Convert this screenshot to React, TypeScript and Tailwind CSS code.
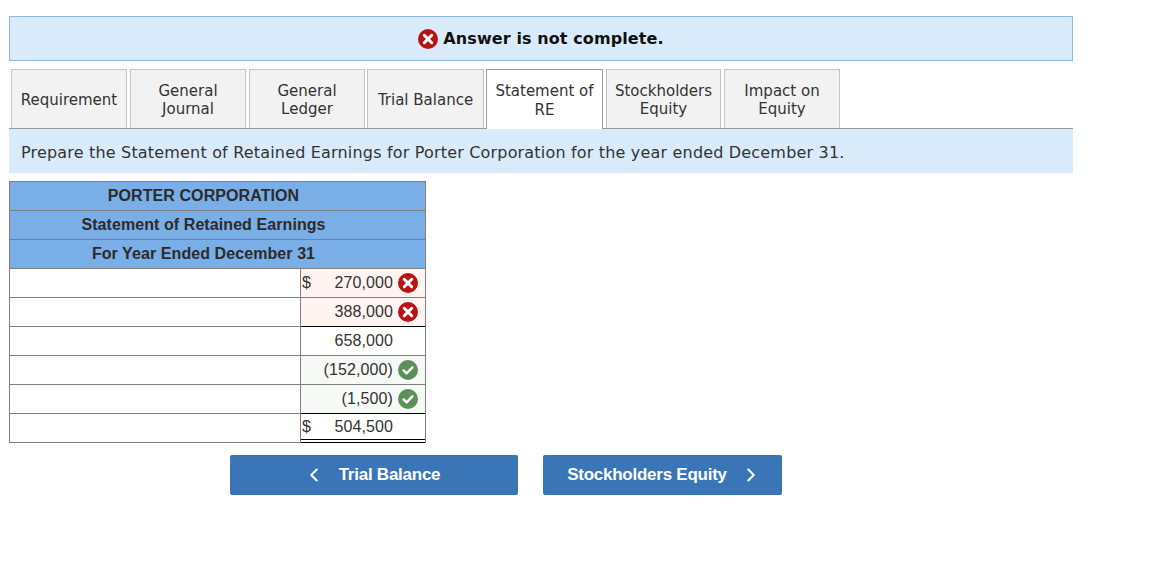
import { ChevronLeft, ChevronRight } from 'lucide-react'

const verdana = { fontFamily: '"DejaVu Sans", Verdana, sans-serif' }

const tabs = [
  { label: ['Requirement'], w: 'w-[119px] pr-[3px]' },
  { label: ['General', 'Journal'], w: 'w-[119px] pr-[3px]' },
  { label: ['General', 'Ledger'], w: 'w-[118px] pr-[2px]' },
  { label: ['Trial Balance'], w: 'w-[119px] pr-[2px]' },
  { label: ['Statement of', 'RE'], w: 'w-[120px] pr-[3px]', active: true },
  { label: ['Stockholders', 'Equity'], w: 'w-[118px] pr-[3px]' },
  { label: ['Impact on', 'Equity'], w: 'w-[119px] pr-[3px]' },
]

const rows = [
  { dollar: true, value: '270,000', mark: 'bad', top: 'border-t-[#808080]' },
  { value: '388,000', mark: 'bad', top: 'border-t-[#808080]' },
  { value: '658,000', top: 'border-t-black' },
  { value: '(152,000)', mark: 'good', top: 'border-t-[#808080]' },
  { value: '(1,500)', mark: 'good', top: 'border-t-[#808080]' },
  { dollar: true, value: '504,500', top: 'border-t-black', total: true },
]

function BadIcon({ size = 20 }: { size?: number }) {
  return (
    <svg width={size} height={size} viewBox="0 0 20 20" className="shrink-0">
      <circle cx="10" cy="10" r="10" fill="#b81414" />
      <path d="M6.3 6.3l7.4 7.4M13.7 6.3l-7.4 7.4" stroke="#fff" strokeWidth="3" strokeLinecap="round" />
    </svg>
  )
}

function GoodIcon() {
  return (
    <svg width="20" height="20" viewBox="0 0 20 20" className="shrink-0">
      <circle cx="10" cy="10" r="10" fill="#5b9158" />
      <path d="M5.6 10.4l3 2.9 5.8-6" fill="none" stroke="#fff" strokeWidth="2.4" strokeLinecap="round" strokeLinejoin="round" />
    </svg>
  )
}

export default function App() {
  return (
    <div className="min-h-[567px] bg-white pt-4 pl-[9px] font-['Liberation_Sans',Arial,sans-serif]">
      <div className="w-[1064px]">
        {/* Banner */}
        <div className="flex h-[45px] items-center justify-center gap-[5px] border border-[#8cb8e6] bg-[#d9ebfa]">
          <BadIcon />
          <span style={verdana} className="text-[16px] font-bold tracking-[0.1px] text-[#111]">Answer is not complete.</span>
        </div>

        {/* Tabs */}
        <div className="mt-2 flex h-[60px] items-start border-b border-b-[#999] pl-[2px] text-[15px] leading-[18.5px] text-[#333]" style={verdana}>
          {tabs.map((tab) => (
            <div key={tab.label.join(' ')} className={`${tab.w} shrink-0`}>
              <div
                className={
                  tab.active
                    ? 'relative flex h-[60px] flex-col items-center justify-center border border-b-0 border-[#999] bg-white pt-[3px] pb-px'
                    : 'flex h-[59px] flex-col items-center justify-center border border-b-0 border-[#c4c4c4] bg-[#f2f2f2] pt-[2px]'
                }
              >
                {tab.label.map((line) => (
                  <span key={line} className="whitespace-nowrap">{line}</span>
                ))}
              </div>
            </div>
          ))}
        </div>

        {/* Instruction */}
        <div style={verdana} className="flex h-[44px] items-center bg-[#d9ebfa] pt-[3px] pl-3 text-[16px] tracking-[0.18px] text-[#333]">
          Prepare the Statement of Retained Earnings for Porter Corporation for the year ended December 31.
        </div>

        {/* Statement table */}
        <div className="mt-2 w-[417px] border-x border-b border-[#808080] text-[16px] text-[#333]">
          {['PORTER CORPORATION', 'Statement of Retained Earnings', 'For Year Ended December 31'].map((title) => (
            <div key={title} className="flex h-[29px] items-center justify-center border-t border-[#808080] bg-[#7aaee6] pr-[28px] pb-px font-bold tracking-[0.08px] text-[#2b2b2b]">
              {title}
            </div>
          ))}
          {rows.map((row) => (
            <div key={row.value} className="flex h-[29px] border-t border-[#808080]">
              <div className="w-[291px] shrink-0 border-r border-[#808080] bg-white" />
              <div
                className={`relative -mt-px flex h-[29px] flex-1 items-center border-t ${row.top} ${
                  row.mark === 'bad' ? 'bg-[#fff4f2]' : row.mark === 'good' ? 'bg-[#f6f9f5]' : 'bg-white'
                } ${row.total ? 'pb-[2px]' : ''} pr-[7px] pl-[1px] tracking-[0.1px]`}
              >
                {row.dollar && <span>$</span>}
                <span className="mr-[5px] ml-auto">{row.value}</span>
                <div className="w-5">{row.mark === 'bad' ? <BadIcon /> : row.mark === 'good' ? <GoodIcon /> : null}</div>
                {row.total && <div className="absolute inset-x-0 -bottom-px h-[4px] border-y border-black" />}
              </div>
            </div>
          ))}
        </div>

        {/* Nav buttons */}
        <div className="mt-3 flex gap-[25px] pl-[221px] text-[17px] font-bold tracking-[-0.25px] text-white">
          <button className="flex h-10 w-[288px] items-center justify-center gap-[14px] rounded-[2px] bg-[#3a75b8] pr-[5px]">
            <ChevronLeft size={22} strokeWidth={2.2} />
            Trial Balance
          </button>
          <button className="flex h-10 w-[239px] items-center justify-center gap-[13px] rounded-[2px] bg-[#3a75b8] pl-[4px]">
            Stockholders Equity
            <ChevronRight size={22} strokeWidth={2.2} />
          </button>
        </div>
      </div>
    </div>
  )
}
